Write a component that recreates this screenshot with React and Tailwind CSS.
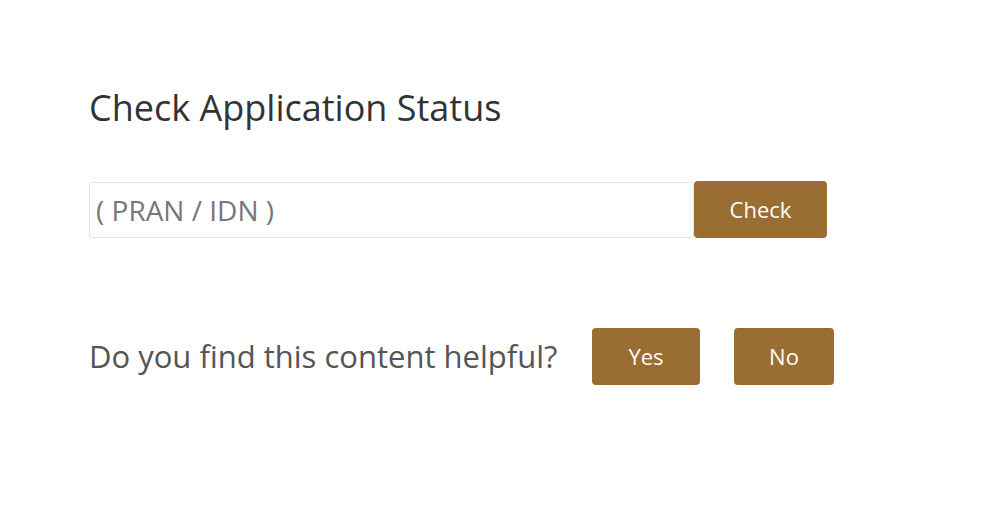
export default function App() {
  return (
    <div className="min-h-screen bg-white text-[#3a3a3a]" style={{ fontFamily: '"Open Sans", "Noto Sans", sans-serif' }}>
      <div className="pl-[89px] pt-[84px]">
        <h2 className="text-[36px] leading-[48px] font-normal text-[#333]">Check Application Status</h2>

        <div className="mt-[49px] flex items-center">
          <input
            type="text"
            placeholder="( PRAN / IDN )"
            className="w-[605px] h-[56px] border border-[#e4e4e4] rounded-[3px] px-[6px] text-[28px] text-[#555] placeholder:text-[#777] outline-none"
          />
          <button className="h-[57px] w-[133px] bg-[#9a6d33] text-white text-[22px] rounded-[4px]">Check</button>
        </div>

        <div className="mt-[90px] flex items-center">
          <p className="text-[31px] text-[#555] w-[503px]">Do you find this content helpful?</p>
          <button className="h-[57px] w-[108px] bg-[#9a6d33] text-white text-[22px] rounded-[4px]">Yes</button>
          <button className="ml-[34px] h-[57px] w-[100px] bg-[#9a6d33] text-white text-[22px] rounded-[4px]">No</button>
        </div>
      </div>
    </div>
  );
}
